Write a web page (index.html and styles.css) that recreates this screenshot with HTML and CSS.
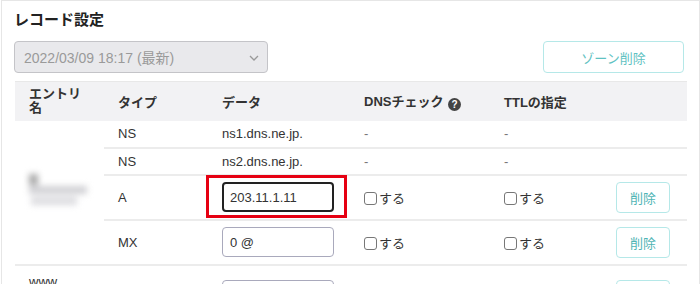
FILE: index.html
```html
<!DOCTYPE html>
<html lang="ja">
<head>
<meta charset="utf-8">
<link rel="stylesheet" href="styles.css">
</head>
<body>
<div class="panel">
  <h2 class="title">レコード設定</h2>
  <div class="toolbar">
    <div class="select">
      <span>2022/03/09 18:17 (最新)</span>
      <svg class="chev" width="10" height="6" viewBox="0 0 10 6"><polyline points="1,1 5,5 9,1" fill="none" stroke="#999" stroke-width="1.3"/></svg>
    </div>
    <button class="btn-zone">ゾーン削除</button>
  </div>
  <table class="records">
    <colgroup>
      <col class="c-entry"><col class="c-type"><col class="c-data"><col class="c-dns"><col class="c-ttl"><col class="c-act">
    </colgroup>
    <thead>
      <tr>
        <th class="entry-h">エントリ<br>名</th>
        <th>タイプ</th>
        <th>データ</th>
        <th>DNSチェック <span class="help">?</span></th>
        <th>TTLの指定</th>
        <th></th>
      </tr>
    </thead>
    <tbody>
      <tr class="short">
        <td class="entry" rowspan="4">
          <div class="blur">
            <span class="b1"></span><span class="b2"></span><span class="b3"></span>
          </div>
        </td>
        <td>NS</td>
        <td>ns1.dns.ne.jp.</td>
        <td class="dash">-</td>
        <td class="dash">-</td>
        <td></td>
      </tr>
      <tr class="short">
        <td>NS</td>
        <td>ns2.dns.ne.jp.</td>
        <td class="dash">-</td>
        <td class="dash">-</td>
        <td></td>
      </tr>
      <tr class="tall">
        <td>A</td>
        <td><div class="hl"><span class="field focus">203.11.1.11</span></div></td>
        <td><span class="chk"></span>する</td>
        <td><span class="chk"></span>する</td>
        <td><button class="btn-del">削除</button></td>
      </tr>
      <tr class="tall last">
        <td>MX</td>
        <td><span class="field">0 @</span></td>
        <td><span class="chk"></span>する</td>
        <td><span class="chk"></span>する</td>
        <td><button class="btn-del">削除</button></td>
      </tr>
      <tr class="tall">
        <td class="entry top">www</td>
        <td></td>
        <td class="top"><span class="field next"></span></td>
        <td></td>
        <td></td>
        <td class="top"><button class="btn-del next"></button></td>
      </tr>
    </tbody>
  </table>
</div>
</body>
</html>
```
FILE: styles.css
```css
* { box-sizing: border-box; }
html, body { margin: 0; padding: 0; background: #fff; }
body {
  font-family: "Liberation Sans", "Noto Sans CJK JP", sans-serif;
  font-size: 13px;
  color: #333;
  overflow: hidden;
  height: 284px;
}
.panel {
  margin-left: 1px;
  width: 699px;
  border: 1px solid #e6e6e6;
  border-bottom: none;
  padding: 9px 14px 0 12px;
  height: 284px;
  overflow: hidden;
}
.title {
  margin: 0;
  font-size: 15px;
  font-weight: bold;
  line-height: 20px;
  color: #222;
}
.toolbar {
  display: flex;
  justify-content: space-between;
  align-items: flex-start;
  margin-top: 11px;
  height: 40px;
}
.select {
  width: 254px;
  height: 32px;
  background: #e9e9ec;
  border: 1px solid #c4c4c8;
  border-radius: 4px;
  display: flex;
  align-items: center;
  justify-content: space-between;
  padding: 0 8px 0 9px;
  color: #9a9a9a;
  font-size: 14px;
}
.chev { margin-top: 1px; }
.btn-zone {
  width: 141px;
  height: 32px;
  margin-right: 1px;
  background: #fff;
  border: 1px solid #b5e8e8;
  border-radius: 4px;
  color: #5fc2c2;
  font-family: inherit;
  font-size: 13px;
}
.records {
  border-collapse: collapse;
  table-layout: fixed;
  width: 672px;
  margin-left: 1px;
}
.c-entry { width: 89px; }
.c-type { width: 104px; }
.c-data { width: 142px; }
.c-dns { width: 140px; }
.c-ttl { width: 112px; }
.c-act { width: 85px; }
th {
  background: #f2f2f4;
  text-align: left;
  font-weight: bold;
  font-size: 13px;
  color: #333;
  height: 39px;
  padding: 0 14px;
  vertical-align: middle;
  border-top: 1px solid #e8e8e8;
}
th.entry-h { line-height: 14px; padding-top: 0; }
.help {
  display: inline-flex;
  width: 13px;
  height: 13px;
  border-radius: 50%;
  background: #444;
  color: #fff;
  font-size: 10px;
  font-weight: bold;
  align-items: center;
  justify-content: center;
  vertical-align: -2px;
  margin-left: 1px;
}
td {
  padding: 0 14px;
  vertical-align: middle;
  border-bottom: 2px solid #ececec;
  white-space: nowrap;
}
tr.short td { height: 27px; }
tr.tall td { height: 45px; }
td.dash { color: #777; }
td.top { vertical-align: top; padding-top: 14px; }
td.entry.top { padding-top: 8px; }
.blur {
  position: relative;
  height: 40px;
  margin-left: -2px;
  filter: blur(3px);
}
.blur span { display: block; position: absolute; background: #c8c8cc; }
.blur .b1 { left: 2px; top: 2px; width: 9px; height: 11px; background: #a8a8a8; }
.blur .b2 { left: 2px; top: 14px; width: 58px; height: 8px; background: #d0d0d4; }
.blur .b3 { left: 4px; top: 25px; width: 46px; height: 8px; background: #dcdce0; }
.hl { position: relative; display: inline-block; }
.hl::before {
  content: "";
  position: absolute;
  left: -16px;
  right: -13px;
  top: -7px;
  bottom: -6px;
  border: 3px solid #e60012;
}
.field {
  display: inline-flex;
  align-items: center;
  width: 112px;
  height: 30px;
  border: 1px solid #a9a9bc;
  border-radius: 4px;
  padding: 0 7px;
  font-size: 13px;
  color: #333;
  vertical-align: middle;
}
.field.focus { border: 2px solid #222; padding: 0 6px; }
.chk {
  display: inline-block;
  width: 13px;
  height: 13px;
  border: 1px solid #777;
  border-radius: 3px;
  vertical-align: -2px;
  margin-right: 2px;
}
.btn-del {
  width: 54px;
  height: 31px;
  background: #fff;
  border: 1px solid #b5e8e8;
  border-radius: 4px;
  color: #4fb5b5;
  font-family: inherit;
  font-size: 13px;
  padding: 0;
}
.next { height: 30px; }
```
